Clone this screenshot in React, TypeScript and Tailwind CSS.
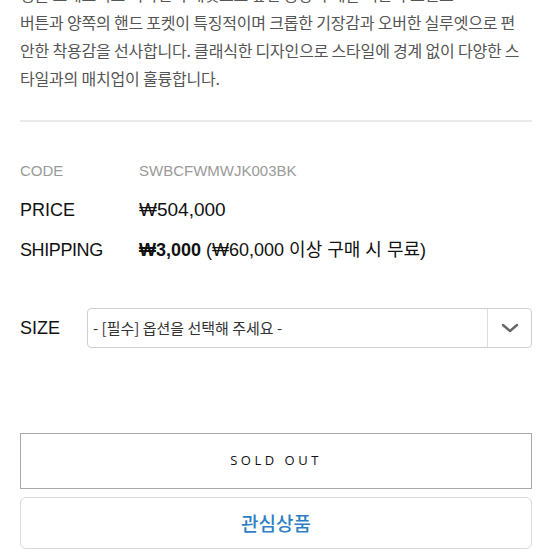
import React from "react";

const kr = "font-['Noto_Sans_CJK_KR',sans-serif]";
const latin = "font-['Liberation_Sans','Noto_Sans_CJK_KR',sans-serif]";

const descLines = [
  "싱글 브레스티드 디자인의 재킷으로 앞면 중앙의 메탈 버튼과 포인트",
  "버튼과 양쪽의 핸드 포켓이 특징적이며 크롭한 기장감과 오버한 실루엣으로 편",
  "안한 착용감을 선사합니다. 클래식한 디자인으로 스타일에 경계 없이 다양한 스",
  "타일과의 매치업이 훌륭합니다.",
];

const App: React.FC = () => {
  return (
    <div className="w-[554px] h-[554px] overflow-hidden bg-white px-5">
      {/* 상품 설명 */}
      <div className={`${kr} mt-[-20px] text-[16px] leading-[28px] tracking-[-0.2px] text-[#555]`}>
        {descLines.map((line, i) => (
          <p key={i} className="whitespace-nowrap">
            {line}
          </p>
        ))}
      </div>

      <div className="mt-[28px] h-[2px] w-[512px] bg-[#ebebeb]" />

      {/* 상품 정보 */}
      <div className={`${latin} mt-[38px]`}>
        <div className="flex items-center h-[22px] text-[15px] text-[#9a9a9a]">
          <span className="w-[119px]">CODE</span>
          <span>SWBCFWMWJK003BK</span>
        </div>
        <div className="flex items-center h-[24px] mt-[16px] text-[18px] text-[#111]">
          <span className="w-[119px]">PRICE</span>
          <span className="text-[19px]">₩504,000</span>
        </div>
        <div className="flex items-center h-[24px] mt-[16px] text-[18px] text-[#111]">
          <span className="w-[119px] tracking-[-0.4px]">SHIPPING</span>
          <span className="font-bold">₩3,000</span>
          <span className="ml-[5px]">(₩60,000 이상 구매 시 무료)</span>
        </div>
      </div>

      {/* 옵션 */}
      <div className="mt-[46px] flex items-center">
        <span className={`${latin} w-[67px] text-[18px] text-[#111]`}>SIZE</span>
        <div className="flex h-[40px] w-[445px] items-stretch rounded-[4px] border border-[#cfcfcf] bg-white">
          <div className={`${kr} flex flex-1 items-center pl-[5px] text-[15px] text-[#333]`}>
            - [필수] 옵션을 선택해 주세요 -
          </div>
          <div className="flex w-[44px] items-center justify-center border-l border-[#ddd]">
            <svg width="18" height="10" viewBox="0 0 18 10" fill="none">
              <path d="M2 2l7 6 7-6" stroke="#666" strokeWidth="2.4" strokeLinecap="round" strokeLinejoin="round" />
            </svg>
          </div>
        </div>
      </div>

      {/* 버튼 */}
      <button
        type="button"
        className="mt-[85px] flex h-[56px] w-[512px] items-center justify-center border-[1.5px] border-[#a9a9a9] bg-white font-['Open_Sans',sans-serif] text-[13px] tracking-[3.5px] text-[#111]"
      >
        SOLD OUT
      </button>
      <button
        type="button"
        className={`${kr} mt-[8px] flex h-[52px] w-[512px] items-center justify-center rounded-[6px] border border-[#d9d9d9] bg-white text-[19px] font-medium text-[#2f7fc4]`}
      >
        관심상품
      </button>
    </div>
  );
};

export default App;
